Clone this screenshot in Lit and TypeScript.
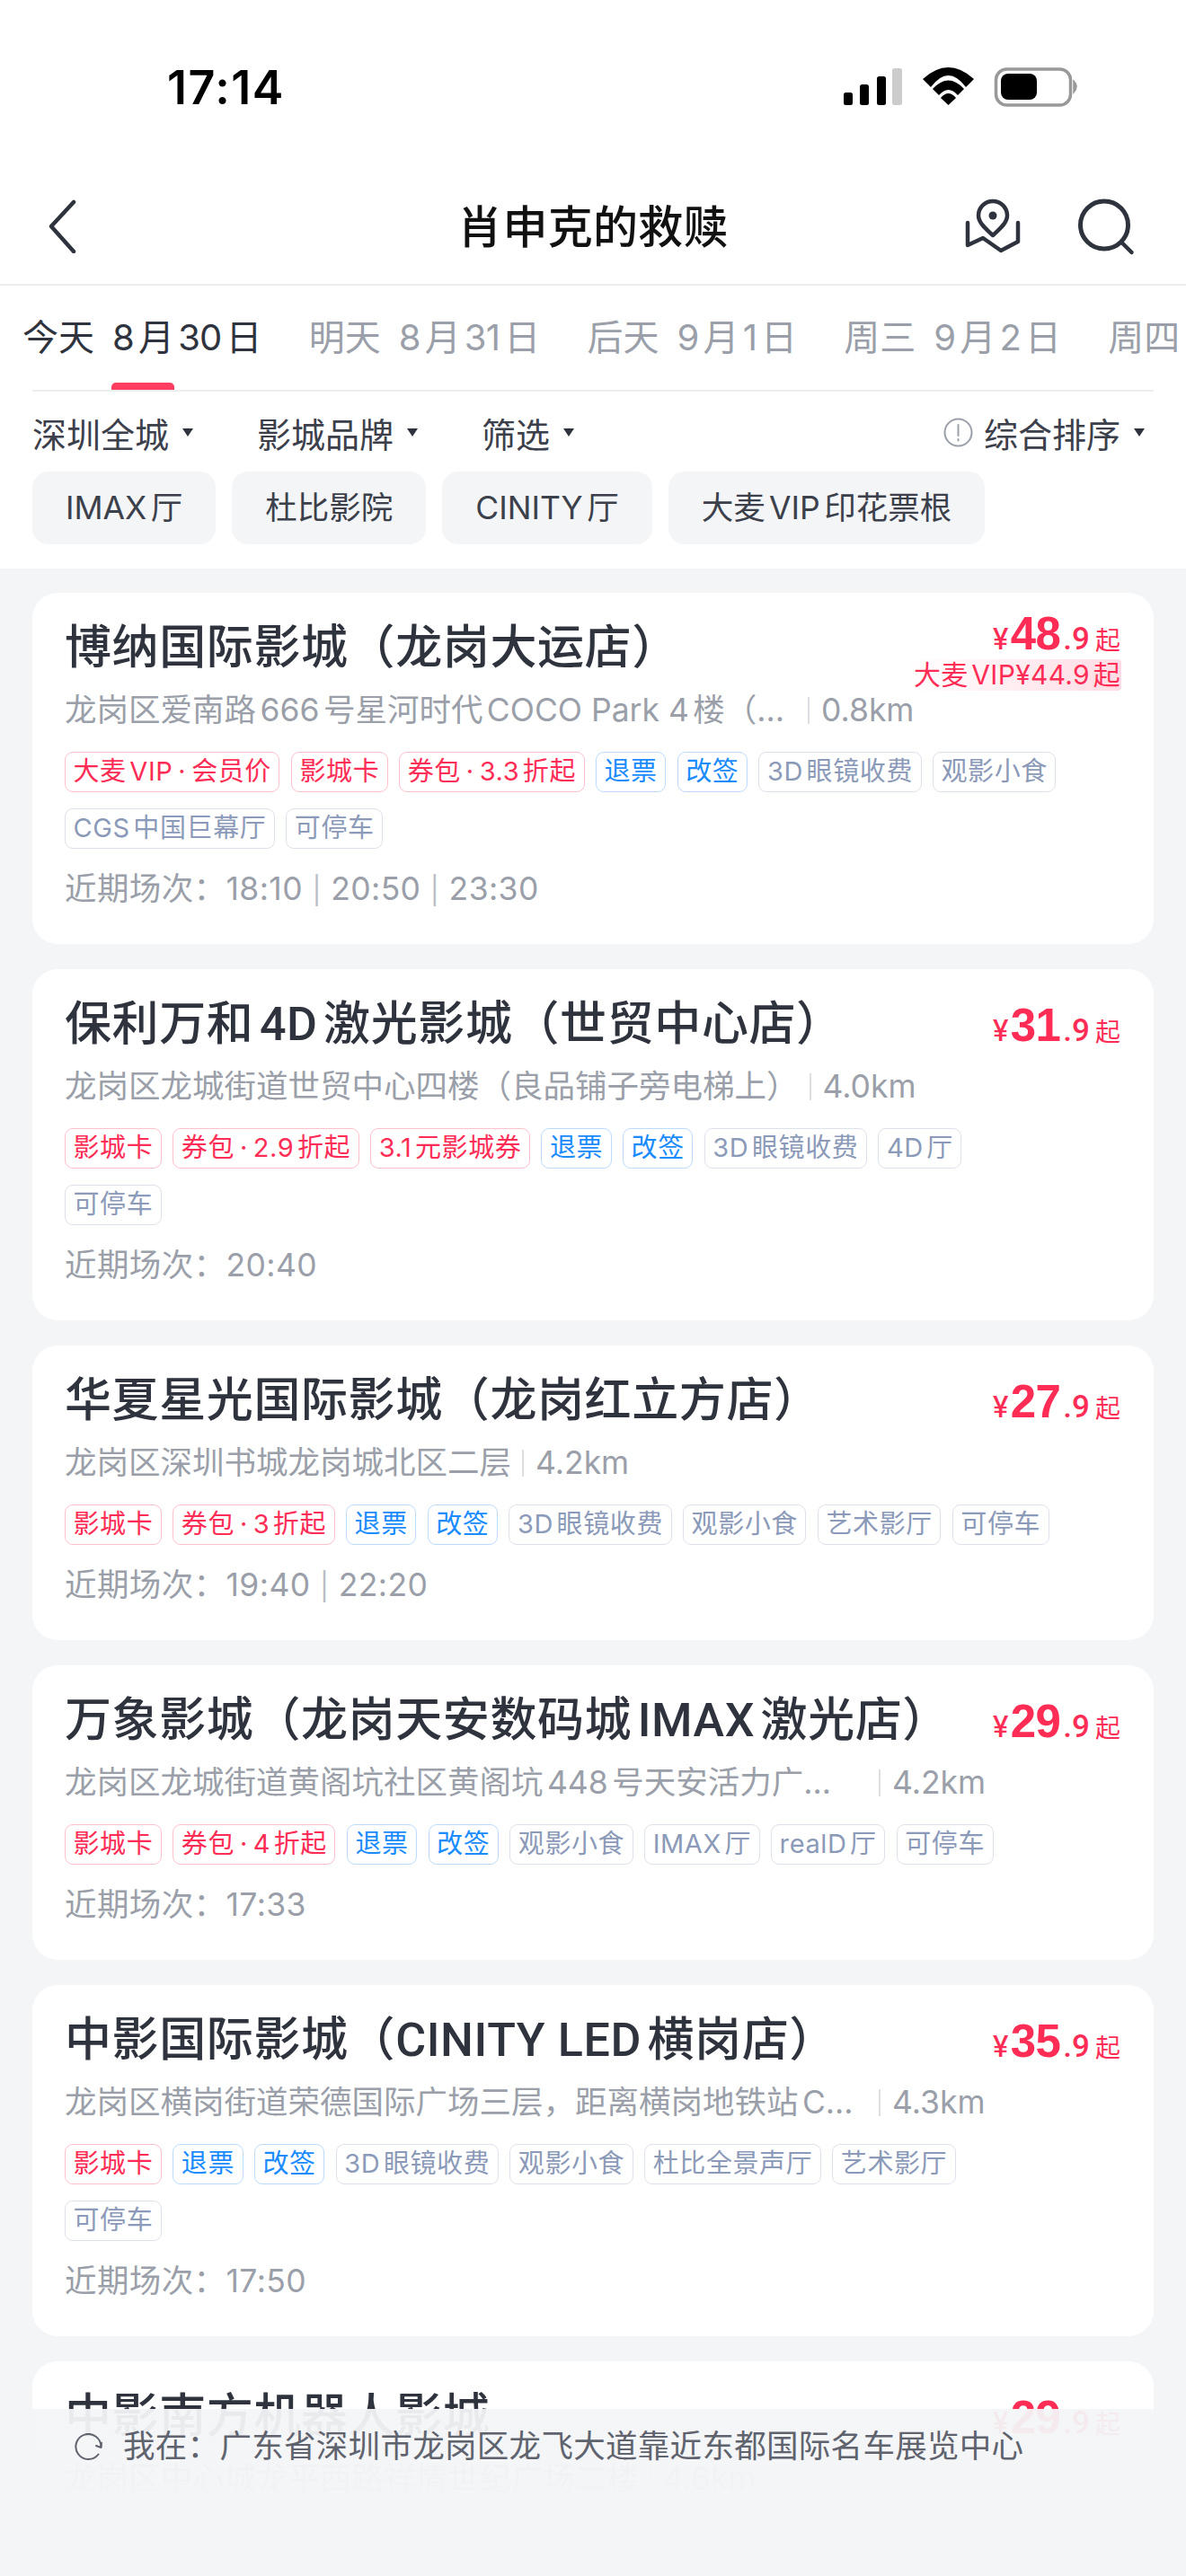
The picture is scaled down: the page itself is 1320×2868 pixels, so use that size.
import { LitElement, html, css } from "lit";
import { customElement } from "lit/decorators.js";

type Tag = [string, "r" | "b" | "g"];
interface Cinema { name: string; price: string; vip?: string; addr: string; addrW?: number; dist: string; tags: Tag[]; times: string[] }

const R = (s: string): Tag => [s, "r"];
const B = (s: string): Tag => [s, "b"];
const G = (s: string): Tag => [s, "g"];

const cinemas: Cinema[] = [
  { name: "博纳国际影城（龙岗大运店）", price: "48", vip: "大麦VIP¥44.9起", addr: "龙岗区爱南路666号星河时代COCO Park 4楼（...", addrW: 815, dist: "0.8km",
    tags: [R("大麦VIP\u2009·\u2009会员价"), R("影城卡"), R("券包\u2009·\u20093.3折起"), B("退票"), B("改签"), G("3D眼镜收费"), G("观影小食"), G("CGS中国巨幕厅"), G("可停车")], times: ["18:10", "20:50", "23:30"] },
  { name: "保利万和4D激光影城（世贸中心店）", price: "31", addr: "龙岗区龙城街道世贸中心四楼（良品铺子旁电梯上）", dist: "4.0km",
    tags: [R("影城卡"), R("券包\u2009·\u20092.9折起"), R("3.1元影城券"), B("退票"), B("改签"), G("3D眼镜收费"), G("4D厅"), G("可停车")], times: ["20:40"] },
  { name: "华夏星光国际影城（龙岗红立方店）", price: "27", addr: "龙岗区深圳书城龙岗城北区二层", dist: "4.2km",
    tags: [R("影城卡"), R("券包\u2009·\u20093折起"), B("退票"), B("改签"), G("3D眼镜收费"), G("观影小食"), G("艺术影厅"), G("可停车")], times: ["19:40", "22:20"] },
  { name: "万象影城（龙岗天安数码城IMAX激光店）", price: "29", addr: "龙岗区龙城街道黄阁坑社区黄阁坑448号天安活力广...", addrW: 894, dist: "4.2km",
    tags: [R("影城卡"), R("券包\u2009·\u20094折起"), B("退票"), B("改签"), G("观影小食"), G("IMAX厅"), G("realD厅"), G("可停车")], times: ["17:33"] },
  { name: "中影国际影城（CINITY LED横岗店）", price: "35", addr: "龙岗区横岗街道荣德国际广场三层，距离横岗地铁站C...", addrW: 894, dist: "4.3km",
    tags: [R("影城卡"), B("退票"), B("改签"), G("3D眼镜收费"), G("观影小食"), G("杜比全景声厅"), G("艺术影厅"), G("可停车")], times: ["17:50"] },
  { name: "中影南方机器人影城", price: "29", addr: "龙岗区中心城龙平西路祥情世纪广场二楼", dist: "4.6km", tags: [], times: [] },
];

const dates = [["今天", "8月30日"], ["明天", "8月31日"], ["后天", "9月1日"], ["周三", "9月2日"], ["周四", ""]];

@customElement("app-root")
export class AppRoot extends LitElement {
  static styles = css`
    :host { display: block; width: 1320px; height: 2868px; overflow: hidden; position: relative; background: #f4f5f7;
      font-family: "Inter", "Noto Sans CJK SC", sans-serif; color: #2e333e; text-autospace: normal; }
    * { box-sizing: border-box; }
    .head { background: #fff; height: 633px; display: flex; flex-direction: column; }
    .status { height: 186px; flex: none; padding: 75px 114px 0 186px; display: flex; align-items: flex-start; justify-content: space-between; }
    .time { font-size: 52px; font-weight: 600; color: #000; margin-top: -8px; line-height: 62px; letter-spacing: 1.5px; }
    .nav { height: 132px; display: flex; align-items: flex-start; justify-content: space-between; border-bottom: 2px solid #eceded; position: relative; flex: none; padding-top: 29px; }
    .back { margin: 7px 0 0 50px; }
    .title { position: absolute; left: 0; right: 0; text-align: center; top: 37px; font-size: 50px; line-height: 60px; font-weight: 500; color: #111; letter-spacing: 0.3px; }
    .dates { height: 116px; display: flex; padding: 33px 0 0 25px; gap: 53px; white-space: nowrap; overflow: hidden; flex: none; position: relative; font-size: 40px; color: #9a9fa9; line-height: 50px; }
    .dates .on { color: #2e333e; }
    .d { display: flex; gap: 20px; flex: none; }
    .d .dt { letter-spacing: -0.8px; }
    .ul { position: absolute; left: 124px; bottom: 0; width: 70px; height: 8px; border-radius: 5px 5px 0 0; background: #ff3d60; }
    .rule { height: 2px; background: #eceded; margin: 0 36px; flex: none; }
    .filters { display: flex; align-items: center; height: 89px; padding: 1px 46px 0 36px; font-size: 38px; flex: none; color: #3b404b; }
    .f { display: flex; align-items: center; gap: 15px; margin-right: 71px; }
    .f i { width: 0; height: 0; border-left: 6px solid transparent; border-right: 6px solid transparent; border-top: 9px solid #2e333e; display: block; }
    .sort { margin-left: auto; margin-right: 0; gap: 15px; }
    .sort span { margin-left: -3px; }
    .quick { display: flex; gap: 18px; padding: 0 36px; flex: none; }
    .q { height: 81px; border-radius: 18px; background: #f4f5f7; font-size: 35.5px; line-height: 81px; padding: 0 37px; color: #3b404b; }
    .list { display: flex; flex-direction: column; gap: 28px; padding: 27px 36px 0; }
    .card { background: #fff; border-radius: 28px; padding: 29px 36px 38px; position: relative; }
    .name { font-family: Roboto, "Noto Sans CJK SC", sans-serif; font-size: 52px; line-height: 66px; font-weight: 500; color: #2e333e; white-space: nowrap; letter-spacing: 0.6px; }
    .addr { display: flex; align-items: center; font-size: 35.5px; line-height: 46px; color: #9a9fa9; margin-top: 13px; white-space: nowrap; }
    .addr b { font-weight: 400; display: block; flex: none; }
    .addr s { width: 2px; height: 30px; background: #dcdee2; margin: 0 13px 0 12px; display: block; flex: none; }
    .tags { display: flex; flex-wrap: wrap; gap: 18px 12.5px; margin-top: 23px; max-width: 1107px; }
    .t { height: 45px; line-height: 42px; padding: 0 8.5px; border-radius: 9px; font-size: 29px; letter-spacing: 0.6px; border: 1.5px solid; white-space: nowrap; }
    .t.r { color: #ff2d55; border-color: #ffc0cd; }
    .t.b { color: #1a8cff; border-color: #bcdcff; }
    .t.g { color: #8b9ab8; border-color: #dde1ea; }
    .times { font-size: 35.5px; color: #9a9fa9; line-height: 46px; height: 46px; margin-top: 22px; white-space: pre; letter-spacing: 0.4px; }
    .times em { font-style: normal; color: #b9bdc5; font-size: 30px; line-height: 0; }
    .price { position: absolute; right: 36px; top: 28px; text-align: right; color: #ff2d55; display: flex; flex-direction: column; align-items: flex-end; }
    .price.hasvip { top: 11px; }
    .p { display: flex; justify-content: flex-end; align-items: baseline; line-height: 70px; height: 70px; padding-right: 1px; }
    .p .y { font-size: 32px; font-weight: 500; margin-right: 2px; }
    .p .n { font-family: "Liberation Sans", sans-serif; font-size: 51px; font-weight: 700; letter-spacing: -0.5px; }
    .p .c { font-family: Roboto, sans-serif; font-size: 35px; font-weight: 500; margin-left: 3px; }
    .p .q2 { font-size: 28px; margin-left: 6px; }
    .vip { font-size: 30px; line-height: 35px; height: 35px; padding: 0 1px 0 30px; margin-top: -7px; border-radius: 4px;
      background: linear-gradient(90deg, rgba(255,220,228,0) 8%, #ffdce4 100%); letter-spacing: 0.3px; }
    .bottom { position: absolute; left: 0; right: 0; top: 2682px; bottom: 0; font-size: 35.5px; color: #5e636e;
      background: linear-gradient(180deg, rgba(244,245,247,.94) 0, rgba(244,245,247,.97) 80px, #f4f5f7 110px); }
    .loc { display: flex; align-items: center; gap: 22px; padding: 0 0 0 83px; margin-top: 20px; line-height: 44px; white-space: nowrap; letter-spacing: 0.3px; }
  `;

  private tag(t: Tag) { return html`<span class="t ${t[1]}">${t[0]}</span>`; }

  render() {
    return html`
      <div class="head">
        <div class="status">
          <span class="time">17:14</span>
          <svg width="270" height="44" viewBox="0 0 270 44">
            <rect x="3" y="28" width="10" height="14" rx="2.5"/><rect x="21" y="19" width="10" height="23" rx="2.5"/><rect x="40" y="10" width="10" height="32" rx="2.5"/><rect x="57" y="1" width="11" height="41" rx="2.5" fill="#ccc"/>
            <path d="M91 13 Q119.5 -13 148 13 L139 22 Q119.5 -4 100 22Z M102 24 Q119.5 5 137 24 L130 31 Q119.5 19 109 31Z M111 34 Q119.5 24 128 34 L119.5 42Z"/>
            <rect x="172.5" y="2" width="83" height="40" rx="12" fill="none" stroke="#999" stroke-width="3.5"/>
            <rect x="178" y="7" width="40" height="29" rx="8"/>
            <path d="M259 15 Q265 21 259 28Z" fill="#999" stroke="#999" stroke-width="1.5"/>
          </svg>
        </div>
        <div class="nav">
          <svg class="back" width="40" height="60" viewBox="0 0 40 60" fill="none" stroke="#2e333e" stroke-width="4.5" stroke-linecap="round" stroke-linejoin="round"><path d="M32 3 L7 30 L32 58"/></svg>
          <div class="title">肖申克的救赎</div>
          <svg width="260" height="75" viewBox="0 0 260 75" fill="none" stroke="#2e333e" stroke-width="4.5" stroke-linecap="round" stroke-linejoin="round">
            <path d="M45 47 C35 38 29 32 29 25 A16 16 0 0 1 61 25 C61 32 55 38 45 47Z"/>
            <circle cx="45" cy="25" r="4.5" fill="#2e333e" stroke="none"/>
            <path d="M17 33 V58 L34 50 L54 64 L73 54 V33"/>
            <circle cx="169" cy="35.5" r="26.5" stroke-width="5"/>
            <path d="M188.5 55 L199.5 66" stroke-width="4.5"/>
          </svg>
        </div>
        <div class="dates">
          ${dates.map((d, i) => html`<div class="d ${i === 0 ? "on" : ""}"><span>${d[0]}</span>${d[1] ? html`<span class="dt">${d[1]}</span>` : ""}</div>`)}
          <div class="ul"></div>
        </div>
        <div class="rule"></div>
        <div class="filters">
          <div class="f">深圳全城<i></i></div>
          <div class="f">影城品牌<i></i></div>
          <div class="f">筛选<i></i></div>
          <div class="f sort">
            <svg width="33" height="33" viewBox="0 0 33 33" fill="none" stroke="#9a9fa9" stroke-width="2"><circle cx="16.5" cy="16.5" r="15"/><path d="M16.5 8 V20 M16.5 24 V25.5" stroke-linecap="round"/></svg>
            <span>综合排序</span><i></i>
          </div>
        </div>
        <div class="quick">
          <div class="q">IMAX厅</div><div class="q">杜比影院</div><div class="q">CINITY厅</div><div class="q">大麦VIP印花票根</div>
        </div>
      </div>
      <div class="list">
        ${cinemas.map((c) => html`
          <div class="card">
            <div class="name">${c.name}</div>
            <div class="price ${c.vip ? "hasvip" : ""}">
              <div class="p"><span class="y">¥</span><span class="n">${c.price}</span><span class="c">.9</span><span class="q2">起</span></div>
              ${c.vip ? html`<div class="vip">${c.vip}</div>` : ""}
            </div>
            <div class="addr"><b style=${c.addrW ? `width:${c.addrW}px` : ""}>${c.addr}</b><s></s><span>${c.dist}</span></div>
            ${c.tags.length ? html`<div class="tags">${c.tags.map((t) => this.tag(t))}</div>` : ""}
            ${c.times.length ? html`<div class="times">近期场次：${c.times.map((t, i) => html`${i ? html` <em>|</em> ` : ""}${t}`)}</div>` : ""}
          </div>`)}
      </div>
      <div class="bottom">
        <div class="loc">
          <svg width="32" height="30" viewBox="0 0 32 30" fill="none" stroke="#5e636e" stroke-width="2" stroke-linecap="round" stroke-linejoin="round"><path d="M26.5 23.5 A14 14 0 1 1 29.4 15"/><path d="M24 14 L29.5 16 L30 10.7"/></svg>
          <span>我在：广东省深圳市龙岗区龙飞大道靠近东都国际名车展览中心</span>
        </div>
      </div>`;
  }
}
